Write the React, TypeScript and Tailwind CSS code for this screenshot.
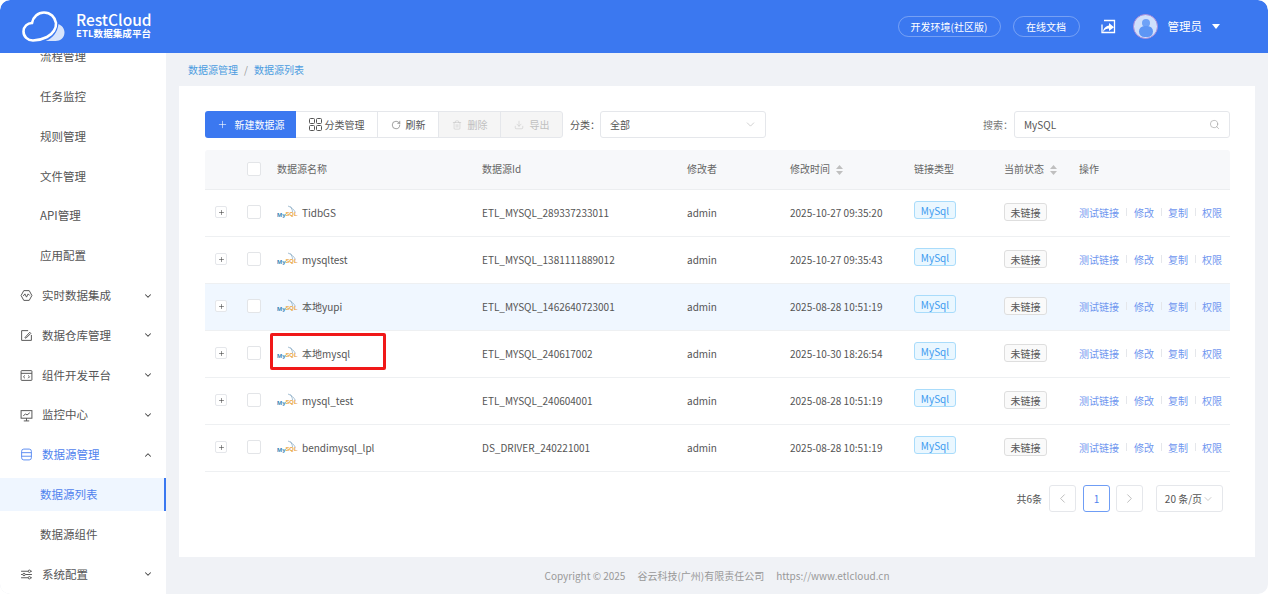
import { ChevronDown, ChevronLeft, ChevronRight, ChevronUp, Download, Plus, RotateCw, Search, Trash2 } from "lucide-react";
import type { ReactNode } from "react";

const gridCols = "grid grid-cols-[42px_30px_205px_205px_103px_124px_90px_75px_151px]";

const rows = [
  { name: "TidbGS", id: "ETL_MYSQL_289337233011", time: "2025-10-27 09:35:20" },
  { name: "mysqltest", id: "ETL_MYSQL_1381111889012", time: "2025-10-27 09:35:43" },
  { name: "本地yupi", id: "ETL_MYSQL_1462640723001", time: "2025-08-28 10:51:19", hover: true },
  { name: "本地mysql", id: "ETL_MYSQL_240617002", time: "2025-10-30 18:26:54", marked: true },
  { name: "mysql_test", id: "ETL_MYSQL_240604001", time: "2025-08-28 10:51:19" },
  { name: "bendimysql_lpl", id: "DS_DRIVER_240221001", time: "2025-08-28 10:51:19" },
];

function CloudLogo() {
  return (
    <svg width="43" height="31" viewBox="0 0 43 31" fill="none" className="shrink-0">
      <path
        d="M11 29.500C5.500 29.500 1.500 25.500 1.500 20.500 1.500 15.500 5.500 12 10 12 11 6 16 1.500 22 1.500c6.500 0 11 4.500 12 10.500.5 5-3 11-9 14-4 2-8 3.500-14 3.500Z"
        stroke="white"
        strokeWidth="2.600"
      />
      <path d="M36.500 13c3.500 1.500 6 4.500 6 8.500 0 5-4 8.500-9 8.500h-10c7-2.500 12-8.500 13-17Z" fill="white" fillOpacity="0.8" />
    </svg>
  );
}

function MysqlMark() {
  return (
    <svg width="21" height="14" viewBox="0 0 21 14" fill="none" className="shrink-0">
      <path d="M11 1c3 1 6 3.500 7.500 6.500M13.500 1.500c1 2 2 3.500 2 5.500" stroke="#8fb0c8" strokeWidth="0.800" />
      <text x="0" y="11.500" fontSize="6.200" fontWeight="700" fill="#3a86b5" fontFamily="Liberation Sans, sans-serif">My</text>
      <text x="8.500" y="10.500" fontSize="5.800" fontWeight="700" fill="#e8a33d" fontFamily="Liberation Sans, sans-serif">SQL</text>
    </svg>
  );
}

function SortArrows() {
  return (
    <svg width="7" height="10" viewBox="0 0 7 10" fill="#bfbfbf" className="ml-[6px] mt-[2px] inline-block">
      <path d="M3.500 0 7 4H0ZM3.500 10 0 6h7Z" />
    </svg>
  );
}

function MenuIcon({ children, active }: { children: ReactNode; active?: boolean }) {
  return (
    <svg
      width="13"
      height="13"
      viewBox="0 0 12 12"
      fill="none"
      stroke={active ? "#5b8df2" : "#555"}
      strokeWidth="0.900"
      className="shrink-0"
    >
      {children}
    </svg>
  );
}

const subTop = ["流程管理", "任务监控", "规则管理", "文件管理", "API管理", "应用配置"];

function GroupItem({ icon, label, active }: { icon: ReactNode; label: string; active?: boolean }) {
  return (
    <div className={`flex h-[39.8px] items-center pl-[20px] pr-[13px] text-[11.500px] ${active ? "text-[#4f83ee]" : "text-[#555]"}`}>
      <MenuIcon active={active}>{icon}</MenuIcon>
      <span className="ml-[9px] flex-1">{label}</span>
      {active ? <ChevronUp size={10} strokeWidth={2.500} className="text-[#444]" /> : <ChevronDown size={10} strokeWidth={2.500} className="text-[#444]" />}
    </div>
  );
}

function Sidebar() {
  return (
    <aside className="h-full w-[166px] shrink-0 overflow-hidden rounded-bl-[10px] bg-white">
      <div className="-mt-[16px]">
        {subTop.map((t) => (
          <div key={t} className="flex h-[39.8px] items-center pl-[40px] text-[11.500px] text-[#555]">
            {t}
          </div>
        ))}
        <GroupItem
          label="实时数据集成"
          icon={
            <>
              <path d="M3.500 1.500h5L11 6 8.500 10.500h-5L1 6Z" />
              <path d="M3 6.500l1.500-2 1.500 3 1.500-3L9 6" />
            </>
          }
        />
        <GroupItem
          label="数据仓库管理"
          icon={
            <>
              <path d="M10.500 5.500v5h-9v-9h6" />
              <path d="M4.500 8l4.500-5 1 1-4.500 4.500Z" />
            </>
          }
        />
        <GroupItem
          label="组件开发平台"
          icon={
            <>
              <rect x="1" y="1.500" width="10" height="9" rx="0.500" />
              <path d="M1 4h10M4.500 6 3.200 7.200 4.500 8.500M7.500 6l1.300 1.200-1.300 1.300" />
            </>
          }
        />
        <GroupItem
          label="监控中心"
          icon={
            <>
              <rect x="1" y="1.500" width="10" height="7" />
              <path d="M3 6.500 5 4.500l1.500 1L9 3.500M6 8.500v2.500M3.500 11h5" />
            </>
          }
        />
        <GroupItem
          active
          label="数据源管理"
          icon={
            <>
              <rect x="1.500" y="1" width="9" height="10" rx="2" />
              <path d="M1.500 4.300h9M1.500 7.600h9" />
            </>
          }
        />
        <div className="flex h-[39.8px] items-center">
          <div className="flex h-[33px] w-full items-center border-r-2 border-[#3b78f0] bg-[#eff6ff] pl-[40px] text-[11.500px] text-[#4f83ee]">
            数据源列表
          </div>
        </div>
        <div className="flex h-[39.8px] items-center pl-[40px] text-[11.500px] text-[#555]">数据源组件</div>
        <GroupItem
          label="系统配置"
          icon={
            <>
              <path d="M1 3h6.500M10 3h1M1 6h1.500M5 6h6M1 9h6.500M10 9h1" />
              <circle cx="8.700" cy="3" r="1.100" />
              <circle cx="3.700" cy="6" r="1.100" />
              <circle cx="8.700" cy="9" r="1.100" />
            </>
          }
        />
      </div>
    </aside>
  );
}

function Header() {
  return (
    <header className="flex h-[53px] shrink-0 items-center rounded-t-[10px] bg-[#3b78f0] pl-[22px] pr-[48px] text-white">
      <CloudLogo />
      <div className="ml-[11px] -mt-[3px] flex flex-col">
        <span className="text-[15.500px] leading-[17px] font-medium">RestCloud</span>
        <span className="text-[9.500px] leading-[11px] font-bold tracking-[0.1px]">ETL数据集成平台</span>
      </div>
      <div className="ml-auto flex items-center">
        <span className="flex h-[21px] w-[103px] items-center justify-center rounded-full border border-white/30 text-[10px]">
          开发环境(社区版)
        </span>
        <span className="ml-[12px] flex h-[21px] w-[67px] items-center justify-center rounded-full border border-white/30 text-[10px]">
          在线文档
        </span>
        <svg width="15" height="15" viewBox="0 0 15 15" fill="none" className="ml-[21px]">
          <path d="M3 1.500h10.500v12H1V5.500" stroke="white" strokeWidth="1.300" />
          <path d="M2 13c.5-4 3-6 6-6.500V4l5 4.200-5 3.800V9.500c-2.500 0-4.500 1-6 3.500Z" fill="white" />
        </svg>
        <div className="relative ml-[17px] h-[25px] w-[25px] overflow-hidden rounded-full border border-[#a78bda] bg-[#cfe0fc]">
          <span className="absolute left-[8px] top-[4px] h-[8px] w-[8px] rounded-full bg-[#6ea2f7]" />
          <span className="absolute left-[5px] top-[11px] h-[11px] w-[14px] rounded-full bg-[#5d96f5]" />
        </div>
        <span className="ml-[10px] text-[11.500px]">管理员</span>
        <span className="ml-[10px] h-0 w-0 border-x-[4px] border-t-[5px] border-x-transparent border-t-white" />
      </div>
    </header>
  );
}

function Toolbar() {
  return (
    <div className="flex h-[27px] items-center">
      <div className="flex h-full w-[358px] overflow-hidden rounded-[3px] text-[10px]">
        <div className="flex w-[91px] items-center justify-center gap-[7px] bg-[#3b78f0] text-white">
          <Plus size={11} strokeWidth={1.300} />
          新建数据源
        </div>
        <div className="flex w-[82px] items-center justify-center gap-[3px] border-y border-r border-[#e5e7eb] text-[#555]">
          <svg width="13" height="13" viewBox="0 0 13 13" fill="none" stroke="#555" strokeWidth="1">
            <rect x="0.500" y="0.500" width="5" height="5" rx="1" />
            <rect x="7.500" y="0.500" width="5" height="5" rx="1" />
            <rect x="0.500" y="7.500" width="5" height="5" rx="1" />
            <rect x="7.500" y="7.500" width="5" height="5" rx="1" />
          </svg>
          分类管理
        </div>
        <div className="flex w-[61px] items-center justify-center gap-[5px] border-y border-r border-[#e5e7eb] text-[#555]">
          <RotateCw size={10} strokeWidth={1.300} />
          刷新
        </div>
        <div className="flex w-[62px] items-center justify-center gap-[6px] border-y border-r border-[#e5e7eb] bg-[#f5f5f5] text-[#c0c0c0]">
          <Trash2 size={10} strokeWidth={1.200} />
          删除
        </div>
        <div className="flex flex-1 items-center justify-center gap-[6px] rounded-r-[3px] border-y border-r border-[#e5e7eb] bg-[#f5f5f5] text-[#c0c0c0]">
          <Download size={10} strokeWidth={1.200} />
          导出
        </div>
      </div>
      <span className="ml-[7px] w-[30px] text-[10px] text-[#555]">分类：</span>
      <div className="flex h-full w-[166px] items-center justify-between rounded-[3px] border border-[#e5e7eb] pl-[9px] pr-[8px] text-[10px] text-[#555]">
        全部
        <ChevronDown size={13} strokeWidth={1} className="text-[#aaa]" />
      </div>
      <span className="ml-auto text-[10px] text-[#777]">搜索：</span>
      <div className="ml-[1px] flex h-full w-[216px] items-center justify-between rounded-[3px] border border-[#e5e7eb] pl-[9px] pr-[9px] text-[10px] text-[#555]">
        MySQL
        <Search size={11} strokeWidth={1.300} className="text-[#999]" />
      </div>
    </div>
  );
}

function TableHead() {
  return (
    <div className={`${gridCols} h-[40px] items-center rounded-t-[3px] border-b border-[#eceef0] bg-[#f7f8fa] pb-[2px] text-[10px] text-[#666]`}>
      <span />
      <span className="h-[14px] w-[14px] rounded-[2px] border border-[#e3e5e8] bg-white" />
      <span>数据源名称</span>
      <span>数据源Id</span>
      <span>修改者</span>
      <span className="flex items-center">修改时间<SortArrows /></span>
      <span>链接类型</span>
      <span className="flex items-center">当前状态<SortArrows /></span>
      <span>操作</span>
    </div>
  );
}

function TableRow({ row }: { row: (typeof rows)[number] }) {
  return (
    <div className={`${gridCols} relative h-[47px] items-center border-b border-[#eef0f2] pb-[2px] text-[10px] text-[#555] ${row.hover ? "bg-[#f0f7ff]" : ""}`}>
      <span className="ml-[10px] flex h-[12px] w-[12px] items-center justify-center rounded-[2px] border border-[#e5e7eb] bg-white">
        <Plus size={7} strokeWidth={2} className="text-[#444]" />
      </span>
      <span className="h-[14px] w-[14px] rounded-[2px] border border-[#e3e5e8] bg-white" />
      <span className="flex items-center gap-[4px]">
        <MysqlMark />
        {row.name}
      </span>
      <span>{row.id}</span>
      <span>admin</span>
      <span>{row.time}</span>
      <span className="-mt-[4px] flex h-[18px] w-[42px] items-center justify-center rounded-[3px] border border-[#a9dcfb] bg-[#eaf7ff] text-[#3d9bf0]">
        MySql
      </span>
      <span className="flex h-[18px] w-[43px] items-center justify-center rounded-[3px] border border-[#dedede] bg-[#fafafa] text-[#555]">
        未链接
      </span>
      <span className="flex items-center text-[#6f96ef]">
        测试链接
        <i className="mx-[7px] h-[8px] w-px bg-[#e5e7eb]" />
        修改
        <i className="mx-[6.500px] h-[8px] w-px bg-[#e5e7eb]" />
        复制
        <i className="mx-[6.500px] h-[8px] w-px bg-[#e5e7eb]" />
        权限
      </span>
      {row.marked && (
        <span className="absolute left-[65px] top-[2px] h-[37px] w-[116px] rounded-[2px] border-[3px] border-[#f01818]" />
      )}
    </div>
  );
}

function Pagination() {
  return (
    <div className="mt-[13px] flex items-center justify-end pr-[7px] text-[10px] text-[#555]">
      <span>共6条</span>
      <span className="ml-[7px] flex h-[27px] w-[27px] items-center justify-center rounded-[3px] border border-[#e5e7eb] text-[#aaa]">
        <ChevronLeft size={15} strokeWidth={1.200} />
      </span>
      <span className="ml-[7px] flex h-[27px] w-[27px] items-center justify-center rounded-[3px] border border-[#6f9df5] text-[#4f83ee]">
        1
      </span>
      <span className="ml-[6px] flex h-[27px] w-[27px] items-center justify-center rounded-[3px] border border-[#e5e7eb] text-[#aaa]">
        <ChevronRight size={15} strokeWidth={1.200} />
      </span>
      <span className="ml-[13px] flex h-[27px] w-[67px] items-center justify-center rounded-[3px] border border-[#e5e7eb]">
        20 条/页
        <ChevronDown size={12} strokeWidth={1.200} className="text-[#aaa]" />
      </span>
    </div>
  );
}

export default function App() {
  return (
    <div className="h-[594px] w-[1268px] overflow-hidden bg-white font-['Noto_Sans_CJK_SC','Noto_Sans',sans-serif]">
      <div className="flex h-full flex-col overflow-hidden rounded-[10px] bg-[#f0f2f6]">
        <Header />
        <div className="flex min-h-0 flex-1">
          <Sidebar />
          <main className="flex flex-1 flex-col pl-[13px] pr-[13px]">
            <div className="flex h-[33px] items-center pl-[9px] text-[10px] text-[#4a9be0]">
              数据源管理
              <span className="mx-[6px] text-[#999]">/</span>
              数据源列表
            </div>
            <div className="h-[471px] bg-white pl-[26px] pr-[25px] pt-[25px]">
              <Toolbar />
              <div className="mt-[12px]">
                <TableHead />
                {rows.map((r) => (
                  <TableRow key={r.id} row={r} />
                ))}
              </div>
              <Pagination />
            </div>
            <footer className="flex flex-1 items-center justify-center gap-[12px] text-[10px] text-[#999]">
              <span>Copyright © 2025</span>
              <span>谷云科技(广州)有限责任公司</span>
              <span>https://www.etlcloud.cn</span>
            </footer>
          </main>
        </div>
      </div>
    </div>
  );
}
